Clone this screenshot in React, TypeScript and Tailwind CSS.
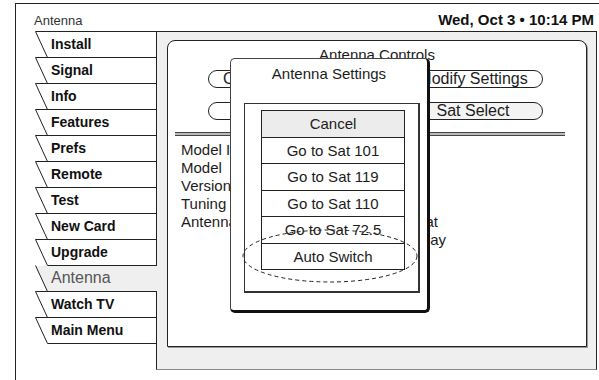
const tabs = [
  "Install",
  "Signal",
  "Info",
  "Features",
  "Prefs",
  "Remote",
  "Test",
  "New Card",
  "Upgrade",
  "Antenna",
  "Watch TV",
  "Main Menu",
];

const choices = [
  "Cancel",
  "Go to Sat 101",
  "Go to Sat 119",
  "Go to Sat 110",
  "Go to Sat 72.5",
  "Auto Switch",
];

function Tab({ label, active }: { label: string; active?: boolean }) {
  return (
    <div className="relative h-[26px]">
      <svg
        className="absolute left-0 top-0"
        width={active ? 122 : 121}
        height={27}
      >
        {active ? (
          <>
            <polygon points="0,1 122,1 122,26 12,26" fill="#efefef" />
            <line x1="0.5" y1="0.5" x2="12.5" y2="26.5" stroke="#222" />
          </>
        ) : (
          <>
            <polygon points="0.5,0.5 121,0.5 121,26.5 12.5,26.5" fill="#fff" />
            <polyline
              points="121,0.5 0.5,0.5 12.5,26.5 121,26.5"
              fill="none"
              stroke="#222"
            />
          </>
        )}
      </svg>
      {active ? (
        <span className="relative block pl-[16px] leading-[26px] text-[16px] text-[#555]">
          {label}
        </span>
      ) : (
        <span className="relative block pl-[16px] leading-[26px] text-[14px] font-bold text-[#111]">
          {label}
        </span>
      )}
    </div>
  );
}

export default function App() {
  return (
    <div className="w-[599px] h-[380px] overflow-hidden bg-white text-[#1c1c1c] font-['Liberation_Sans',Arial,sans-serif]">
      <div className="ml-[15px] mt-[3px] w-[600px] h-[400px] border-l border-t border-[#222]">
        <div className="flex items-baseline justify-between w-[578px] h-[27px] pl-[18px] pt-[7px]">
          <span className="text-[13px] leading-[18px] text-[#333]">Antenna</span>
          <span className="text-[15px] leading-[18px] font-bold text-[#111]">
            Wed, Oct 3 • 10:14 PM
          </span>
        </div>

        <div className="flex ml-[19px]">
          <div className="relative z-10 w-[121px] flex flex-col">
            {tabs.map((t, i) => (
              <Tab key={t} label={t} active={i === 9} />
            ))}
          </div>

          <div className="w-[441px] h-[339px] bg-[#efefef] border border-[#222] border-b-[#888]">
            <div className="relative ml-[10px] mt-[8px] w-[420px] h-[307px] bg-white border border-[#222] rounded-t-[8px] shadow-[1px_1px_0_#999]">
              <div className="mt-[5px] text-center text-[15px] leading-[18px]">
                Antenna Controls
              </div>

              <div className="mt-[6px] flex pl-[40px] gap-[55px]">
                <div className="w-[140px] h-[18px] rounded-full border border-[#222] pl-[14px] text-[16px] leading-[16px] whitespace-nowrap overflow-hidden">
                  Check Switch
                </div>
                <div className="w-[140px] h-[18px] rounded-full border border-[#222] text-center text-[16px] leading-[16px] whitespace-nowrap">
                  Modify Settings
                </div>
              </div>

              <div className="mt-[14px] flex pl-[40px] gap-[55px]">
                <div className="w-[140px] h-[18px] rounded-full border border-[#222] text-center text-[16px] leading-[16px]">
                  Point Dish
                </div>
                <div className="w-[140px] h-[18px] rounded-full border border-[#222] bg-[#f3f3f3] text-center text-[16px] leading-[16px]">
                  Sat Select
                </div>
              </div>

              <div className="ml-[7px] mt-[12px] w-[390px] h-[4px] border-y border-[#444] bg-[#bbb]" />

              <div className="mt-[5px] ml-[13px] w-[265px] text-[15px] leading-[18px]">
                <div className="flex">
                  <span className="w-[110px] shrink-0">Model ID</span>
                  <span>DP301</span>
                </div>
                <div className="flex">
                  <span className="w-[110px] shrink-0">Model</span>
                  <span>DISH Pro</span>
                </div>
                <div className="flex">
                  <span className="w-[110px] shrink-0">Version</span>
                  <span>P220</span>
                </div>
                <div className="flex">
                  <span className="w-[110px] shrink-0">Tuning</span>
                  <span>Normal</span>
                </div>
                <div className="flex">
                  <span className="w-[110px] shrink-0">Antenna</span>
                  <span className="flex-1 text-right pr-[8px]">Legacy Format</span>
                </div>
                <div className="flex">
                  <span className="w-[110px] shrink-0"></span>
                  <span className="flex-1 text-right">On Display</span>
                </div>
              </div>

              <div className="absolute left-[62px] top-[17px] w-[200px] h-[255px] rounded-[5px] bg-white border border-[#444] border-r-[3px] border-b-[3px] border-r-[#111] border-b-[#111]">
                <div className="pt-[6px] text-center text-[15px] leading-[18px]">
                  Antenna Settings
                </div>
                <div className="mt-[20px] ml-[13px] w-[176px] h-[190px] border border-[#333] border-r-2 border-b-2 pt-[6px] pl-[16px]">
                  {choices.map((c, i) => (
                    <div
                      key={c}
                      className={
                        i === 0
                          ? "w-[144px] h-[27.5px] border border-[#222] bg-[#ececec] text-center text-[15px] leading-[26px]"
                          : "w-[144px] h-[27.5px] -mt-px border border-[#222] bg-white text-center text-[15px] leading-[26px]"
                      }
                    >
                      {c}
                    </div>
                  ))}
                </div>
                <svg
                  className="absolute left-[11px] top-[170px]"
                  width={176}
                  height={54}
                >
                  <ellipse
                    cx="88"
                    cy="27"
                    rx="87"
                    ry="26"
                    fill="none"
                    stroke="#222"
                    strokeDasharray="4 3"
                  />
                </svg>
              </div>
            </div>
          </div>
        </div>
      </div>
    </div>
  );
}
